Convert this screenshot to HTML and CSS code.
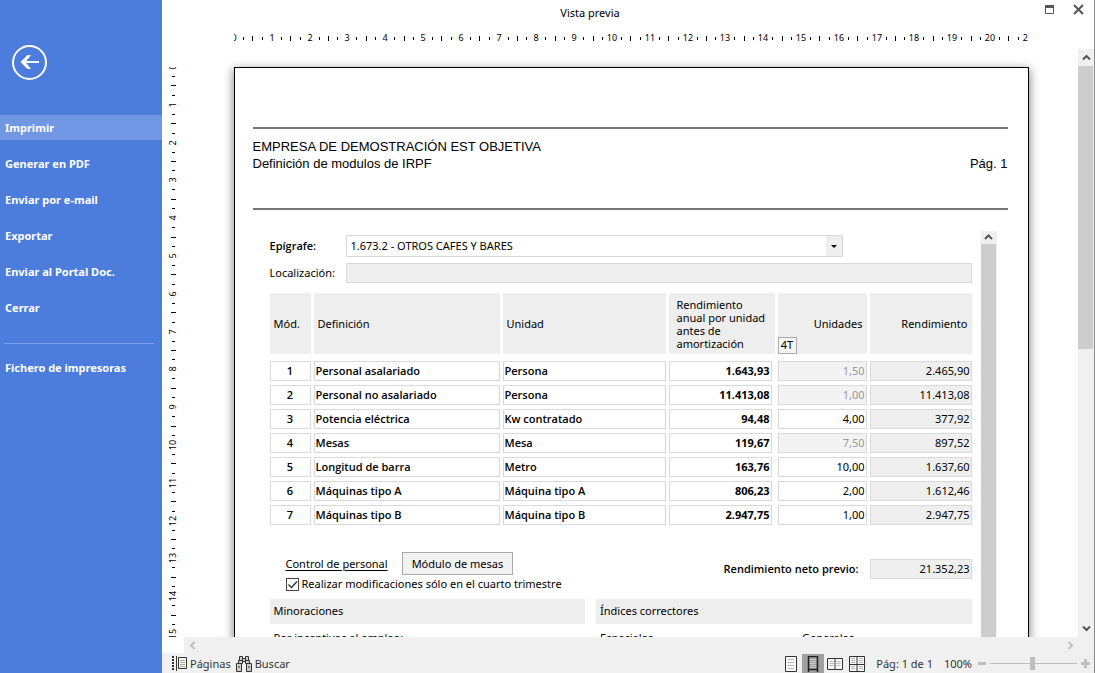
FILE: index.html
```
<!DOCTYPE html>
<html lang="es">
<head>
<meta charset="utf-8">
<title>Vista previa</title>
<link rel="stylesheet" href="styles.css">
</head>
<body>
<div class="app">
  <aside class="sidebar">
    <button class="back" type="button" aria-label="Volver">
      <svg width="35" height="35" viewBox="0 0 35 35" fill="none" stroke="#fff"><circle cx="17.5" cy="17.5" r="16.5" stroke-width="2"/><path d="M27 17H11" stroke-width="2"/><path d="M8.500 17l7-7h3.500l-5.500 7 5.500 7H15.500z" fill="#fff" stroke="none"/></svg>
    </button>
    <nav class="menu">
      <button class="menu-item active" type="button">Imprimir</button>
      <button class="menu-item" type="button">Generar en PDF</button>
      <button class="menu-item" type="button">Enviar por e-mail</button>
      <button class="menu-item" type="button">Exportar</button>
      <button class="menu-item" type="button">Enviar al Portal Doc.</button>
      <button class="menu-item" type="button">Cerrar</button>
    </nav>
    <hr class="menu-line">
    <button class="menu-item" type="button">Fichero de impresoras</button>
  </aside>

  <main class="main">
    <header class="titlebar">
      <h1 class="title">Vista previa</h1>
      <div class="window-buttons">
        <button class="icon-button" type="button" aria-label="Maximizar"><svg width="11" height="11" viewBox="0 0 11 11"><path d="M1.500 1.500h8v8h-8z" fill="none" stroke="#555"/><path d="M1 1h9v3H1z" fill="#555"/></svg></button>
        <button class="icon-button" type="button" aria-label="Cerrar ventana"><svg width="11" height="11" viewBox="0 0 11 11"><path d="M1 1l9 9M10 1l-9 9" stroke="#555" stroke-width="2"/></svg></button>
      </div>
    </header>

    <div class="ruler-top"><svg class="ruler-x" id="ruler-x" height="23"></svg></div>
    <div class="ruler-left"><svg class="ruler-y" id="ruler-y" width="22"></svg></div>

    <section class="viewport">
      <article class="page">
        <header class="page-head">
          <p>EMPRESA DE DEMOSTRACIÓN EST OBJETIVA</p>
          <div class="page-sub"><p>Definición de modulos de IRPF</p><p>Pág. 1</p></div>
        </header>
        <div class="capture">
          <form class="form">
            <div class="field field-code">
              <label class="bold" for="epigrafe">Epígrafe:</label>
              <div class="select-wrap">
                <select id="epigrafe"><option>1.673.2 - OTROS CAFES Y BARES</option></select>
                <span class="select-arrow"><svg width="6" height="3"><path d="M0 0h6L3 3z" fill="#000"/></svg></span>
              </div>
            </div>
            <div class="field">
              <label for="localizacion">Localización:</label>
              <input class="box grey" id="localizacion" type="text" disabled>
            </div>
            <table class="modules">
              <colgroup><col class="c-mod"><col class="c-def"><col class="c-uni"><col class="c-year"><col class="c-qty"><col class="c-sum"></colgroup>
              <thead>
                <tr><th>Mód.</th><th>Definición</th><th>Unidad</th><th class="th-year">Rendimiento anual por unidad antes de amortización</th><th class="th-qty">Unidades<span class="quarter">4T</span></th><th class="th-sum">Rendimiento</th></tr>
              </thead>
              <tbody>
                <tr><td><span class="cell mid">1</span></td><td><span class="cell">Personal asalariado</span></td><td><span class="cell">Persona</span></td><td><span class="cell year">1.643,93</span></td><td><input class="box num" aria-label="Unidades 1" value="1,50" disabled></td><td><span class="cell total">2.465,90</span></td></tr>
                <tr><td><span class="cell mid">2</span></td><td><span class="cell">Personal no asalariado</span></td><td><span class="cell">Persona</span></td><td><span class="cell year">11.413,08</span></td><td><input class="box num" aria-label="Unidades 2" value="1,00" disabled></td><td><span class="cell total">11.413,08</span></td></tr>
                <tr><td><span class="cell mid">3</span></td><td><span class="cell">Potencia eléctrica</span></td><td><span class="cell">Kw contratado</span></td><td><span class="cell year">94,48</span></td><td><input class="box num" aria-label="Unidades 3" value="4,00"></td><td><span class="cell total">377,92</span></td></tr>
                <tr><td><span class="cell mid">4</span></td><td><span class="cell">Mesas</span></td><td><span class="cell">Mesa</span></td><td><span class="cell year">119,67</span></td><td><input class="box num" aria-label="Unidades 4" value="7,50" disabled></td><td><span class="cell total">897,52</span></td></tr>
                <tr><td><span class="cell mid">5</span></td><td><span class="cell">Longitud de barra</span></td><td><span class="cell">Metro</span></td><td><span class="cell year">163,76</span></td><td><input class="box num" aria-label="Unidades 5" value="10,00"></td><td><span class="cell total">1.637,60</span></td></tr>
                <tr><td><span class="cell mid">6</span></td><td><span class="cell">Máquinas tipo A</span></td><td><span class="cell">Máquina tipo A</span></td><td><span class="cell year">806,23</span></td><td><input class="box num" aria-label="Unidades 6" value="2,00"></td><td><span class="cell total">1.612,46</span></td></tr>
                <tr><td><span class="cell mid">7</span></td><td><span class="cell">Máquinas tipo B</span></td><td><span class="cell">Máquina tipo B</span></td><td><span class="cell year">2.947,75</span></td><td><input class="box num" aria-label="Unidades 7" value="1,00"></td><td><span class="cell total">2.947,75</span></td></tr>
              </tbody>
            </table>
            <div class="options">
              <div class="options-left">
                <div class="actions"><a href="#personal">Control de personal</a><button class="plain-button" type="button">Módulo de mesas</button></div>
                <label class="check"><input type="checkbox" checked><svg class="tick" width="13" height="13" viewBox="0 0 13 13"><path d="M2.500 6.500l3 3 5.500-6" fill="none" stroke="#333" stroke-width="1.400"/></svg>Realizar modificaciones sólo en el cuarto trimestre</label>
              </div>
              <div class="net"><span class="bold">Rendimiento neto previo:</span><span class="cell total net-value">21.352,23</span></div>
            </div>
            <div class="sections">
              <section class="cuts"><h2>Minoraciones</h2><p>Por incentivos al empleo:</p></section>
              <section class="indexes"><h2>Índices correctores</h2><div class="index-cols"><p>Especiales</p><p>Generales</p></div></section>
            </div>
          </form>
          <div class="inner-scroll"><svg width="9" height="13" viewBox="0 0 9 13"><path d="M1 8l3.500-3.500L8 8" fill="none" stroke="#555" stroke-width="2"/></svg><div class="inner-thumb"></div></div>
        </div>
      </article>
    </section>

    <div class="scroll-y">
      <button class="scroll-button" type="button" aria-label="Subir"><svg width="9" height="7" viewBox="0 0 9 7"><path d="M1 5.500l3.500-3.500L8 5.500" fill="none" stroke="#555" stroke-width="2"/></svg></button>
      <div class="track"><div class="thumb"></div></div>
      <button class="scroll-button" type="button" aria-label="Bajar"><svg width="9" height="7" viewBox="0 0 9 7"><path d="M1 1.500l3.500 3.500L8 1.500" fill="none" stroke="#555" stroke-width="2"/></svg></button>
    </div>
    <div class="scroll-x">
      <button class="scroll-button" type="button" aria-label="Izquierda"><svg width="7" height="9" viewBox="0 0 7 9"><path d="M5.500 1L2 4.500 5.500 8" fill="none" stroke="#bfbfbf" stroke-width="2"/></svg></button>
      <button class="scroll-button" type="button" aria-label="Derecha"><svg width="7" height="9" viewBox="0 0 7 9"><path d="M1.500 1L5 4.500 1.500 8" fill="none" stroke="#bfbfbf" stroke-width="2"/></svg></button>
    </div>

    <footer class="status">
      <button class="tool" type="button"><svg width="15" height="15" viewBox="0 0 15 15"><path d="M1 0v15" stroke="#333" stroke-width="2" stroke-dasharray="2 1"/><path d="M4.500 0v15" stroke="#333"/><path d="M6.500 1.500h8v11h-8z" fill="#f5f5f5" stroke="#333"/><path d="M8 4.500h5M8 6.500h5M8 8.500h5M8 10.500h5" stroke="#aaa"/></svg>Páginas</button>
      <button class="tool" type="button"><svg width="16" height="16" viewBox="0 0 16 16" fill="#ccc" stroke="#333"><path d="M3.500 .5h3v4h-3zM9.500 .5h3v4h-3zM2.500 4.500h4v3h-4zM9.500 4.500h4v3h-4zM6.500 2.500h3v3h-3zM.5 7.500h5v8h-5zM10.500 7.500h5v8h-5z"/><path d="M3 10v2M13 10v2"/></svg>Buscar</button>
      <div class="views">
        <button class="view" type="button" aria-label="Página"><svg width="12" height="16" viewBox="0 0 12 16"><path d="M.5 .5h11v15H.5z" fill="#f8f8f8" stroke="#333"/><path d="M3 3.500h6M3 6.500h6M3 9.500h6M3 12.500h6" stroke="#bbb"/></svg></button>
        <button class="view on" type="button" aria-label="Ancho de página"><svg width="12" height="16" viewBox="0 0 12 16"><path d="M1.500 0v16M10.500 0v16M1 .5h10M1 13.500h10" fill="none" stroke="#222" stroke-width="1.500"/><path d="M3 3.500h6M3 5.500h6M3 7.500h6M3 9.500h6M3 11.500h6" stroke="#ccc"/></svg></button>
        <button class="view" type="button" aria-label="Dos páginas"><svg width="16" height="12" viewBox="0 0 16 12"><path d="M.5 .5h15v11H.5zM8 .5v11" fill="#f8f8f8" stroke="#333"/><path d="M2.500 3.500h4M2.500 5.500h4M2.500 7.500h4M9.500 3.500h4M9.500 5.500h4M9.500 7.500h4" stroke="#bbb"/></svg></button>
        <button class="view" type="button" aria-label="Varias páginas"><svg width="16" height="16" viewBox="0 0 16 16"><path d="M.5 .5h15v15H.5zM8 .5v15M.5 8.500h15" fill="#f8f8f8" stroke="#333"/><path d="M2 2.500h4M2 4.500h4M2 6.500h4M10 2.500h4M10 4.500h4M10 6.500h4M2 10.500h4M2 12.500h4M10 10.500h4M10 12.500h4" stroke="#bbb"/></svg></button>
      </div>
      <span class="page-count">Pág: 1 de 1</span>
      <span class="zoom-value">100%</span>
      <button class="icon-button" type="button" aria-label="Reducir"><svg width="9" height="9"><path d="M0 4.500h8" stroke="#bfbfbf" stroke-width="3"/></svg></button>
      <input class="zoom" type="range" min="0" max="100" value="49" aria-label="Zoom">
      <button class="icon-button" type="button" aria-label="Ampliar"><svg width="9" height="9"><path d="M0 4.500h9M4.500 0v9" stroke="#bfbfbf" stroke-width="3"/></svg></button>
    </footer>
  </main>
</div>
<script src="rulers.js"></script>
</body>
</html>
```
FILE: styles.css
```
* { box-sizing: border-box; }
body { margin: 0; font: 11px/14px "Noto Sans", "Open Sans", sans-serif; color: #000; }
p, h1, h2 { margin: 0; font: inherit; }
button { padding: 0; border: 0; background: none; font: inherit; color: inherit; }
svg { display: block; flex: none; }
.bold { font-family: "Open Sans", sans-serif; font-weight: 600; }

.app { display: flex; height: 100vh; }

.sidebar { flex: none; width: 162px; background: #4c7cdc; color: #fff; }
.back { display: block; margin: 45px 0 35px 12px; }
.menu { display: flex; flex-direction: column; gap: 11px; }
.menu-item { width: 100%; height: 25px; padding-left: 5px; text-align: left; font-weight: 700; }
.active { background: #7197e4; }
.menu-line { height: 1px; margin: 23px 8px 11px 4px; border: 0; background: #7da0e8; }

.main {
  flex: 1; min-width: 0; display: grid; background: #fff; border-right: 1px solid #8a8a8a;
  grid-template: 26px 23px minmax(0, 1fr) 16px 20px / 22px minmax(0, 1fr) 16px;
}
.titlebar { grid-column: 1 / -1; display: flex; align-items: center; }
.title { flex: 1; text-align: center; }
.window-buttons { width: 76px; display: flex; gap: 18px; padding-left: 26px; align-self: start; margin-top: 4px; }

.ruler-top { grid-area: 2 / 2 / 3 / 3; display: flex; justify-content: center; }
.ruler-x { width: 794px; }
.ruler-left { grid-area: 3 / 1 / 4 / 2; overflow: hidden; padding-top: 18px; }
.ruler-y { height: 100%; }
.ruler-text { font-size: 9px; text-anchor: middle; }

.viewport { grid-area: 3 / 2 / 4 / 3; overflow: hidden; }
.page {
  width: 795px; height: 1123px; margin: 18px auto 0; padding: 59px 20px 0 18px;
  border: 1px solid #000; background: #fff; box-shadow: 0 3px 9px 1px rgba(0, 0, 0, .45);
}
.page-head { height: 83px; padding-top: 9px; border: solid #777; border-width: 2px 0; font: 13px/17px "Liberation Sans", sans-serif; }
.page-sub { display: flex; justify-content: space-between; }

.capture { display: flex; gap: 9px; padding: 21px 11px 0 17px; }
.form { flex: 1; min-width: 0; padding-top: 4px; }
.field { display: flex; align-items: center; height: 20px; }
.field-code { height: 22px; margin-bottom: 6px; }
.field label { flex: none; width: 76px; }
.box, select, .cell { height: 20px; border: 1px solid #d9d9d9; border-radius: 0; background: #fff; font: inherit; color: #000; }
.box { display: block; width: 100%; padding: 0 2px; }
.grey { background: #efefef; }
.num { text-align: right; padding: 0 1px 2px; }
.num:disabled { background: #f3f3f3; color: #999; }
.select-wrap { position: relative; width: 497px; }
select { display: block; width: 100%; height: 22px; padding: 0 4px; appearance: none; }
.select-arrow { position: absolute; top: 1px; right: 1px; bottom: 1px; width: 16px; background: #efefef; display: grid; place-items: center; pointer-events: none; }

.modules { width: 100%; margin-top: 10px; table-layout: fixed; border-collapse: separate; border-spacing: 0; }
.c-mod { width: 44px; }
.c-uni { width: 166px; }
.c-year { width: 109px; }
.c-qty { width: 92px; }
.c-sum { width: 102px; }
.modules th { height: 61px; padding: 0 4px; border-right: 3px solid #fff; background: #eee; text-align: left; font-weight: 400; }
.modules th.th-year { padding: 0 4px 0 8px; line-height: 13px; }
.modules th.th-qty, .modules th.th-sum { position: relative; text-align: right; }
.modules th:last-child { border-right: 0; }
.quarter { position: absolute; left: 0; bottom: 0; width: 19px; height: 17px; border: 1px solid #aaa; background: #f5f5f5; text-align: center; }
.modules td { padding: 4px 3px 0 0; }
.modules tbody tr:first-child td { padding-top: 7px; }
.modules td:last-child { padding-right: 0; }
.cell { display: block; padding: 2px 1px; font-family: "Open Sans", sans-serif; font-weight: 600; white-space: nowrap; }
.mid { text-align: center; }
.year { margin-right: 3px; text-align: right; font-family: "Noto Sans", sans-serif; font-weight: 700; }
.total { background: #efefef; font-family: "Noto Sans", sans-serif; font-weight: 400; text-align: right; }

.options { display: flex; justify-content: space-between; padding: 27px 0 8px 16px; }
.actions { display: flex; gap: 14px; align-items: center; }
.actions a { color: #000; text-decoration: underline; text-underline-offset: 2px; }
.plain-button { height: 23px; padding: 0 9px; border: 1px solid #aaa; background: #f2f2f2; }
.check { position: relative; display: flex; align-items: center; gap: 3px; margin-top: 2px; }
.check input { appearance: none; width: 13px; height: 13px; margin: 0; border: 1px solid #444; background: #fff; }
.tick { position: absolute; left: 0; }
.net { display: flex; align-items: center; gap: 11px; height: 34px; }
.net-value { width: 102px; }
.sections { display: flex; gap: 11px; }
.cuts { flex: 316; }
.indexes { flex: 376; }
.sections h2 { height: 25px; padding: 5px 4px; background: #eee; margin-bottom: 7px; }
.sections p { padding-left: 4px; }
.index-cols { display: grid; grid-template-columns: 202px 1fr; }
.inner-scroll { flex: none; width: 16px; background: #f0f0f0; display: flex; flex-direction: column; align-items: center; }
.inner-thumb { flex: 1; width: 15px; background: #cdcdcd; min-height: 500px; }

.scroll-y { grid-area: 3 / 3 / 4 / 4; display: flex; flex-direction: column; background: #f0f0f0; }
.scroll-button { flex: none; width: 16px; height: 17px; display: grid; place-items: center; }
.track { flex: 1; }
.thumb { height: 51%; width: 15px; background: #cdcdcd; }
.scroll-x { grid-area: 4 / 2 / 5 / 4; display: flex; justify-content: space-between; padding-right: 16px; background: #f0f0f0; }

.status { grid-column: 1 / -1; display: flex; align-items: center; padding: 1px 4px 0 10px; background: #f0f0f0; color: #333; }
.tool { display: flex; align-items: center; gap: 3px; margin-right: 5px; }
.views { display: flex; margin-left: auto; margin-right: 8px; }
.view { width: 22px; height: 19px; display: grid; place-items: center; }
.on { background: #a0a0a0; }
.page-count { margin-right: 11px; }
.zoom-value { margin-right: 6px; }
.zoom { appearance: none; width: 87px; height: 13px; margin: 0 4px 0 3px; background: linear-gradient(#bfbfbf, #bfbfbf) center / 100% 1px no-repeat; }
.zoom::-webkit-slider-thumb { appearance: none; width: 5px; height: 13px; background: #bfbfbf; }
```
FILE: rulers.js
```
const NS = "http://www.w3.org/2000/svg";
const CM = 37.8;

function add(svg, name, attrs, text) {
  const el = document.createElementNS(NS, name);
  for (const key in attrs) el.setAttribute(key, attrs[key]);
  if (text !== undefined) el.textContent = text;
  svg.appendChild(el);
}

function drawRuler(svg, length, vertical) {
  for (let n = 0; n <= length; n++) {
    const at = Math.round(n * CM);
    if (vertical) add(svg, "text", { class: "ruler-text", transform: `translate(14 ${at}) rotate(-90)` }, n);
    else add(svg, "text", { class: "ruler-text", x: at, y: 15 }, n);
    for (const part of [0.25, 0.5, 0.75]) {
      const size = part === 0.5 ? 5 : 3;
      const pos = Math.floor((n + part) * CM);
      const start = (vertical ? 11.5 : 12.5) - size / 2;
      add(svg, "rect", vertical
        ? { x: start, y: pos, width: size, height: 1 }
        : { x: pos, y: start, width: 1, height: size });
    }
  }
}

drawRuler(document.getElementById("ruler-x"), 21, false);
drawRuler(document.getElementById("ruler-y"), 15, true);
```
